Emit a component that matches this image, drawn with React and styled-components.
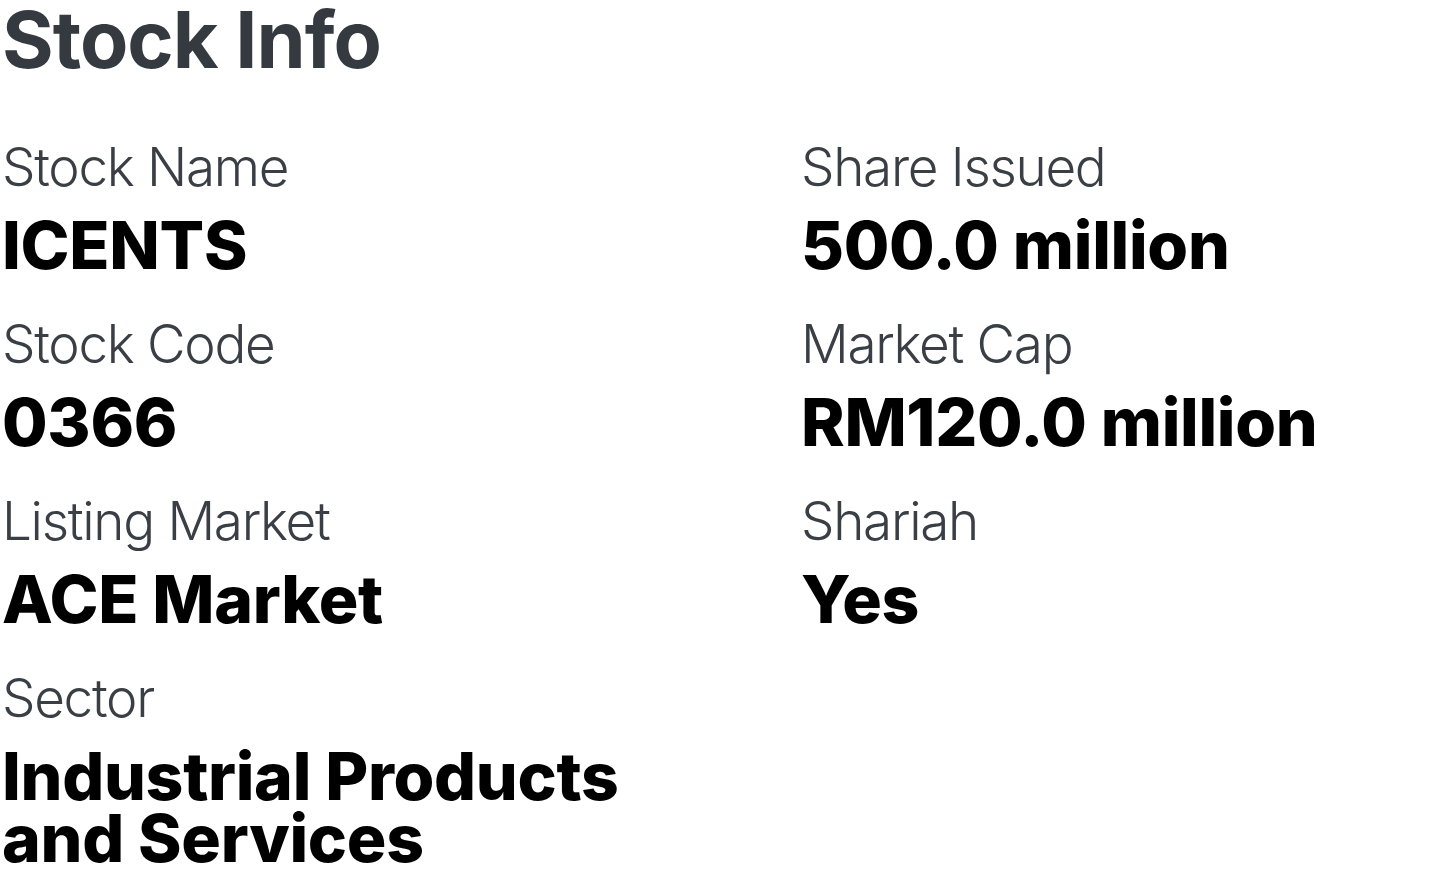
import React from "react";
import styled, { createGlobalStyle } from "styled-components";

const GlobalStyle = createGlobalStyle`
  html, body {
    margin: 0;
    padding: 0;
    background: #fff;
  }
`;

const items = [
  { label: "Stock Name", value: "ICENTS" },
  { label: "Share Issued", value: "500.0 million" },
  { label: "Stock Code", value: "0366" },
  { label: "Market Cap", value: "RM120.0 million" },
  { label: "Listing Market", value: "ACE Market" },
  { label: "Shariah", value: "Yes" },
  { label: "Sector", value: "Industrial Products and Services" },
];

const StockInfo = () => {
  return (
    <Container>
      <GlobalStyle />
      <Title>Stock Info</Title>
      <Grid>
        {items.map((item) => (
          <Item key={item.label}>
            <Label>{item.label}</Label>
            <Value>{item.value}</Value>
          </Item>
        ))}
      </Grid>
    </Container>
  );
};

export default StockInfo;

const Container = styled.div`
  width: 1439px;
  padding-left: 2px;
  font-family: Inter, "Noto Sans", sans-serif;
`;

const Title = styled.h1`
  margin: 0;
  font-size: 79px;
  line-height: 78px;
  font-weight: 700;
  color: #343a40;
  letter-spacing: -1px;
`;

const Grid = styled.div`
  display: grid;
  grid-template-columns: 700px 1fr;
  column-gap: 99px;
  row-gap: 36px;
  margin-top: 57px;
`;

const Item = styled.div`
  display: flex;
  flex-direction: column;
`;

const Label = styled.div`
  font-size: 53px;
  font-weight: 300;
  line-height: 64px;
  letter-spacing: -1.3px;
  color: #3a3f45;
`;

const Value = styled.div`
  margin-top: 15px;
  font-size: 66px;
  font-weight: 800;
  line-height: 62px;
  letter-spacing: -0.3px;
  color: #000;
`;
